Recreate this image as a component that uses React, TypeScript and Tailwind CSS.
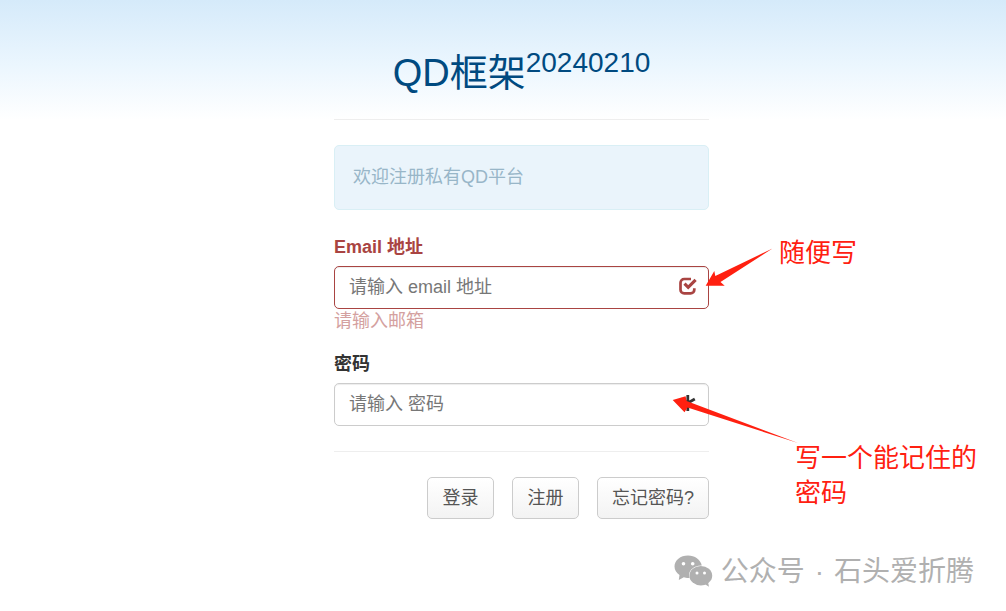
import { useState } from 'react'
import type { ReactNode } from 'react'

function CheckIcon() {
  return (
    <svg viewBox="0 0 18 18" className="w-[18px] h-[18px]" fill="none" stroke="currentColor">
      <path d="M12 2H5.200A3.700 3.700 0 0 0 1.500 5.700v7A3.700 3.700 0 0 0 5.200 16.400h6.400a3.700 3.700 0 0 0 3.700-3.700v-1.400" strokeWidth="2.700" />
      <path d="M5.500 6.600l3.700 3.700 7.400-7.400" strokeWidth="3.200" />
    </svg>
  )
}

function AsteriskIcon() {
  return (
    <svg viewBox="0 0 18 18" className="w-[18px] h-[18px]" stroke="currentColor" strokeWidth="2.8">
      <path d="M8.800 1v16M1.800 5l14 8M15.800 5L1.800 13" />
    </svg>
  )
}

interface FieldProps {
  id: string
  type: string
  label: string
  placeholder: string
  icon: ReactNode
  error?: string
}

function Field({ id, type, label, placeholder, icon, error }: FieldProps) {
  const [value, setValue] = useState('')

  return (
    <div className={error ? 'text-[#a94442]' : 'text-[#333333]'}>
      <label htmlFor={id} className="block mb-1.5 font-bold">
        {label}
      </label>
      <div className="relative">
        <input
          id={id}
          type={type}
          value={value}
          onChange={(e) => setValue(e.target.value)}
          placeholder={placeholder}
          className={
            error
              ? 'block w-full h-[43px] pl-3.5 pr-10 rounded-[5px] border border-[#a94442] bg-white text-[#555555] placeholder:text-[#777777] shadow-[inset_0_1px_1px_rgba(0,0,0,0.075)] outline-none'
              : 'block w-full h-[43px] pl-3.5 pr-10 rounded-[5px] border border-[#cccccc] bg-white text-[#555555] placeholder:text-[#777777] shadow-[inset_0_1px_1px_rgba(0,0,0,0.075)] outline-none'
          }
        />
        <span className="absolute right-3 inset-y-0 pb-[3px] flex items-center pointer-events-none">{icon}</span>
      </div>
      {error && <p className="text-[#d4a1a0]">{error}</p>}
    </div>
  )
}

function FormButton({ children }: { children: ReactNode }) {
  return (
    <button
      type="button"
      className="h-[42px] min-w-[67px] px-3.5 rounded-[5px] border border-[#cccccc] bg-linear-to-b from-white to-[#f3f3f3] text-[#555555] hover:to-[#e8e8e8]"
    >
      {children}
    </button>
  )
}

function Notes() {
  return (
    <div className="absolute inset-0 pointer-events-none text-[#ff2010] text-[26px] leading-[35px]">
      <svg viewBox="0 0 130 205" className="absolute left-[338px] top-[245px] w-[130px] h-[205px]" fill="currentColor">
        <path d="M33.700 40.700L42.300 26l1 5L100.500 3.500 48.500 37l4.200 3.700z" />
        <path d="M.7 155L13.600 151.300l1 4.700L126 198 15.500 162.500l-3 4.700z" />
      </svg>
      <p className="absolute left-[445px] top-[236px] whitespace-nowrap">随便写</p>
      <p className="absolute left-[461px] top-[441px] w-[190px]">写一个能记住的密码</p>
    </div>
  )
}

function Watermark() {
  return (
    <div className="absolute right-8 bottom-[19px] flex items-center gap-2 text-[#b0b0b0] text-[28px] leading-10 whitespace-nowrap">
      <svg viewBox="0 1 40 34" className="w-10 h-[34px]" fill="currentColor">
        <path d="M15 1.500C7.400 1.500 1.500 6.400 1.500 12.500c0 3.500 1.900 6.500 5 8.600L5.800 26l5-2.700c1.500.5 2.700.700 4.500.700h1.200c-2.300-7 4.200-12.800 12.300-12.500C27.500 5.500 21.800 1.500 15 1.500z" />
        <ellipse cx="27.800" cy="21.700" rx="11.400" ry="9.700" />
        <path d="M30.800 29.500l5.200 3.200-1-4.800z" />
        <g fill="#ffffff">
          <circle cx="10.500" cy="9.700" r="1.800" />
          <circle cx="19.700" cy="9.700" r="1.800" />
          <circle cx="24" cy="19" r="1.500" />
          <circle cx="31.500" cy="19" r="1.500" />
        </g>
      </svg>
      <div className="flex gap-2.5">
        <span>公众号</span>
        <span>·</span>
        <span>石头爱折腾</span>
      </div>
    </div>
  )
}

export default function App() {
  return (
    <div className="relative min-h-screen bg-white bg-[linear-gradient(to_bottom,#d5eafa,#ebf6fe_65px,#ffffff_120px)] font-['Liberation_Sans','Noto_Sans_CJK_SC',sans-serif] text-lg leading-[25px]">
      <main className="pl-[37px]">
        <div className="relative mx-auto w-full max-w-[375px] pt-[46px]">
          <h1 className="pb-[18px] text-center text-[38px] leading-[55px] whitespace-nowrap text-[#004a80] border-b border-[#eeeeee]">
            QD框架<sup className="text-[28px] leading-none">20240210</sup>
          </h1>

          <div className="mt-[25px] px-[18px] py-[19px] rounded-[5px] border border-[#d9eff5] bg-[#eaf4fb] text-[#98b6c8]">
            欢迎注册私有QD平台
          </div>

          <form className="mt-[25px]" onSubmit={(e) => e.preventDefault()}>
            <div className="space-y-[18px]">
              <Field
                id="email"
                type="email"
                label="Email 地址"
                placeholder="请输入 email 地址"
                icon={<CheckIcon />}
                error="请输入邮箱"
              />
              <Field id="password" type="password" label="密码" placeholder="请输入 密码" icon={<AsteriskIcon />} />
            </div>

            <div className="mt-[25px] pt-[25px] flex justify-end gap-[18px] border-t border-[#eeeeee]">
              <FormButton>登录</FormButton>
              <FormButton>注册</FormButton>
              <FormButton>忘记密码?</FormButton>
            </div>
          </form>

          <Notes />
        </div>
      </main>
      <Watermark />
    </div>
  )
}
